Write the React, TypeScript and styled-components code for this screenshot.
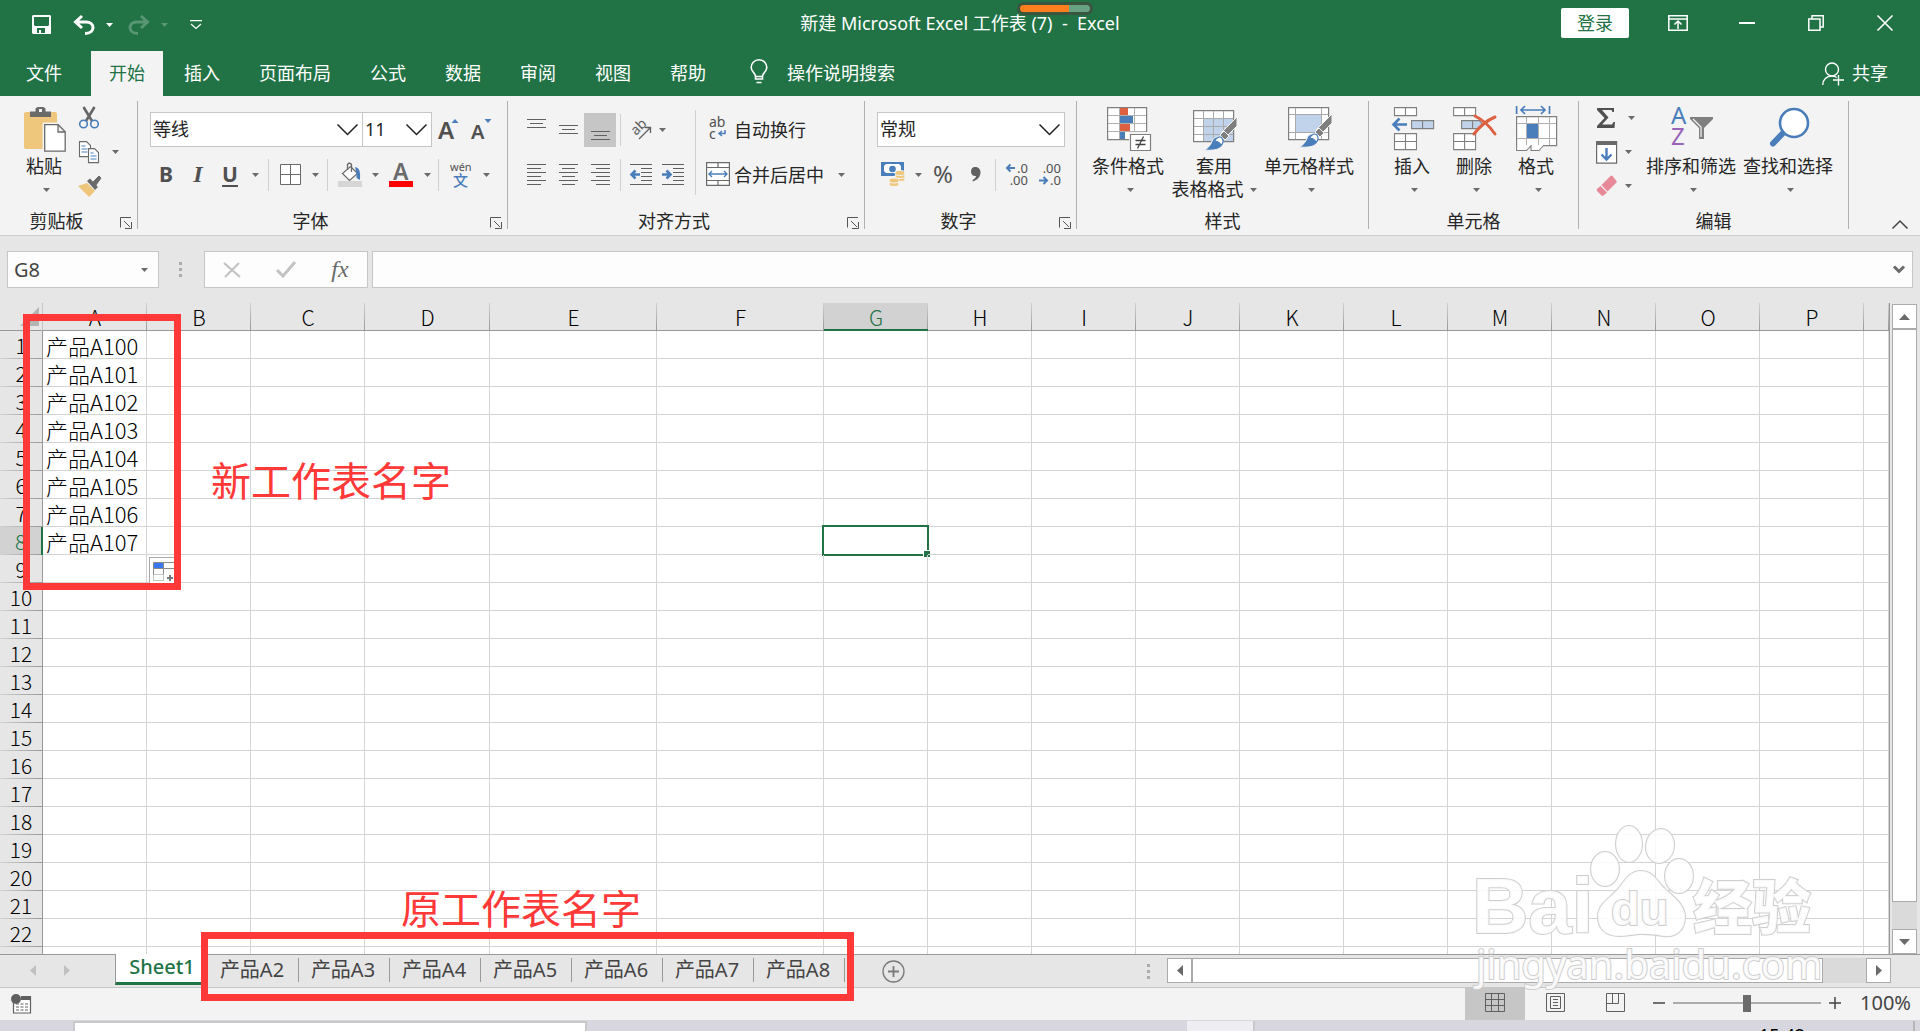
import React from "react";
import styled, { createGlobalStyle, css } from "styled-components";

const UI = `"Noto Sans", "Noto Sans CJK SC", sans-serif`;
const SHEET = `"Noto Sans CJK SC", sans-serif`;
const GREEN = "#217346";
const RED = "#ff3838";
const BLUE = "#4a7ebb";
const GREY = "#6a6a6a";

const Global = createGlobalStyle`
  *, *::before, *::after { box-sizing: border-box; }
  body { margin: 0; font-family: ${UI}; font-size: 18px; color: #262626; background: #e6e6e6; overflow: hidden; }
  button, input, select { font: inherit; color: inherit; margin: 0; padding: 0; border: 0; background: none; }
  svg { display: block; flex: none; overflow: visible; }
`;

const Window = styled.div`
  position: relative;
  display: flex;
  flex-direction: column;
  height: 100vh;
`;

/* ---------- title bar ---------- */
const TitleBar = styled.header`
  display: grid;
  grid-template-columns: 1fr auto 1fr;
  height: 51px;
  flex: none;
  background: ${GREEN};
  color: #fff;
`;
const QuickAccess = styled.div`
  display: flex;
  align-items: center;
  padding: 0 0 2px 32px;
`;
const PlainButton = styled.button<{ $before?: number; $dim?: boolean }>`
  display: flex;
  align-items: center;
  margin-left: ${(p) => p.$before ?? 0}px;
  opacity: ${(p) => (p.$dim ? 0.25 : 1)};
`;
const Title = styled.h1`
  margin: 0;
  font-size: 18px;
  font-weight: 400;
  line-height: 46px;
  white-space: pre;
`;
const WindowControls = styled.div`
  display: flex;
  justify-content: flex-end;
  align-items: center;
  height: 46px;
  padding-right: 1px;
`;
const Login = styled.button`
  width: 68px;
  height: 30px;
  margin-right: 14px;
  border-radius: 2px;
  background: #fff;
  color: ${GREEN};
  line-height: 30px;
`;
const WinButton = styled.button`
  display: grid;
  place-items: center;
  width: 69px;
  height: 46px;
`;
const Battery = styled.div`
  position: absolute;
  left: 1017px;
  top: 2px;
  width: 76px;
  height: 13px;
  border: 3px solid #39553f;
  border-radius: 7px;
  background: linear-gradient(90deg, #ff7f1e 0 70%, #68a283 70%);
`;

/* ---------- ribbon tabs ---------- */
const TabBar = styled.nav`
  display: flex;
  gap: 3px;
  height: 45px;
  flex: none;
  padding-right: 32px;
  background: ${GREEN};
  color: #fff;
`;
const Tab = styled.button<{ $active?: boolean; $file?: boolean }>`
  padding: 0 ${(p) => (p.$file ? 26 : 18)}px 4px;
  background: ${(p) => (p.$active ? "#f3f3f3" : "transparent")};
  color: ${(p) => (p.$active ? GREEN : "#fff")};
`;
const TellMe = styled.button`
  display: flex;
  align-items: center;
  gap: 19px;
  padding: 0 0 4px 23px;
`;
const Share = styled.button`
  display: flex;
  align-items: center;
  gap: 8px;
  margin-left: auto;
  padding-bottom: 4px;
  > svg { margin-top: 4px; }
`;

/* ---------- ribbon ---------- */
const Ribbon = styled.section`
  display: flex;
  flex: none;
  padding: 5px 0 6px;
  background: #f3f3f3;
  border-bottom: 1px solid #cfcfcf;
`;
const Group = styled.section<{ $w: number }>`
  display: flex;
  flex-direction: column;
  flex: 0 1 ${(p) => p.$w}px;
  height: 128px;
  border-right: 1px solid #b1b1b1;
`;
const GroupBody = styled.div<{ $left: number; $gap?: number }>`
  display: flex;
  flex: 1;
  gap: ${(p) => p.$gap ?? 0}px;
  padding-left: ${(p) => p.$left}px;
`;
const GroupFoot = styled.div`
  display: flex;
  align-items: flex-end;
  height: 16px;
  line-height: 16px;
`;
const GroupName = styled.h2`
  flex: 1;
  margin: 0;
  font-size: 18px;
  font-weight: 400;
  text-align: center;
`;
const Launcher = styled.button`
  width: 24px;
  padding-left: 7px;
`;
const Big = styled.button<{ $w: number }>`
  display: flex;
  flex-direction: column;
  align-items: center;
  width: ${(p) => p.$w}px;
  padding-top: 5px;
  line-height: 23px;
  white-space: nowrap;
  > svg { margin: 0 0 3px 2px; }
`;
const SecondLine = styled.span<{ $alone: boolean }>`
  display: flex;
  align-items: center;
  justify-content: center;
  gap: 6px;
  height: 23px;
  padding-left: ${(p) => (p.$alone ? 5 : 0)}px;
`;
const Stack = styled.div<{ $w?: number }>`
  display: flex;
  flex-direction: column;
  flex: none;
  width: ${(p) => (p.$w ? p.$w + "px" : "auto")};
`;
const SmallRow = styled.div<{ $gap: number }>`
  display: flex;
  align-items: center;
  gap: ${(p) => p.$gap}px;
  height: 34px;
`;
const Rows = styled.div`
  display: flex;
  flex-direction: column;
  padding-top: 6px;
`;
const Row = styled.div`
  display: flex;
  align-items: center;
  height: 45px;
`;
const Tool = styled.button<{ $w?: number; $on?: boolean }>`
  display: grid;
  place-items: center;
  width: ${(p) => p.$w ?? 32}px;
  height: 34px;
  background: ${(p) => (p.$on ? "#c6c6c6" : "transparent")};
  color: #505050;
`;
const Glyph = styled.span<{ $bold?: boolean; $italic?: boolean; $under?: boolean; $serif?: boolean; $size?: number }>`
  padding-bottom: 2px;
  font-family: ${(p) => (p.$serif ? `"Liberation Serif", serif` : UI)};
  font-weight: ${(p) => (p.$bold ? 700 : 400)};
  font-style: ${(p) => (p.$italic ? "italic" : "normal")};
  font-size: ${(p) => p.$size ?? 21}px;
  line-height: 24px;
  ${(p) => p.$under && css`text-decoration: underline; text-underline-offset: 3px;`}
`;
const Sep = styled.span<{ $h?: number }>`
  width: 1px;
  height: ${(p) => p.$h ?? 32}px;
  margin: 0 4px;
  background: #d0d0d0;
`;
const LongSep = styled.span`
  width: 1px;
  height: 85px;
  margin: 9px 5px 0 6px;
  background: #d0d0d0;
`;
const Labelled = styled.button`
  display: flex;
  align-items: center;
  gap: 4px;
  height: 45px;
  padding: 0 5px 2px;
  white-space: nowrap;
  > svg:last-child:not(:first-child) { margin: 2px 0 0 10px; }
`;
const SelectBox = styled.label<{ $w: number; $join?: boolean }>`
  display: grid;
  align-items: center;
  width: ${(p) => p.$w}px;
  height: 35px;
  margin-left: ${(p) => (p.$join ? -1 : 0)}px;
  border: 1px solid #c6c6c6;
  background: #fff;
  > * { grid-area: 1 / 1; }
  > svg { justify-self: end; margin-right: 4px; pointer-events: none; }
`;
const Select = styled.select`
  appearance: none;
  width: 100%;
  height: 33px;
  padding: 0 0 1px 2px;
  outline: 0;
`;
const Collapse = styled.button`
  align-self: flex-end;
  margin: 0 12px 0 auto;
`;

/* ---------- formula bar ---------- */
const FormulaRow = styled.section`
  display: flex;
  flex: none;
  height: 67px;
  padding: 15px 7px;
`;
const NameBox = styled.div`
  display: flex;
  align-items: center;
  width: 152px;
  padding-right: 10px;
  border: 1px solid #c6c6c6;
  background: #fdfdfd;
`;
const NameInput = styled.input`
  flex: 1;
  min-width: 0;
  padding-left: 6px;
  font-size: 20px;
  color: #444;
  outline: 0;
`;
const Dots = styled.span`
  display: flex;
  flex-direction: column;
  justify-content: center;
  gap: 3px;
  width: 3px;
  &::before, &::after, i { content: ""; width: 3px; height: 3px; background: #ababab; }
`;
const DotsSlot = styled.div`
  display: flex;
  justify-content: center;
  width: 45px;
  padding-right: 2px;
`;
const FnBox = styled.div`
  display: flex;
  width: 164px;
  margin-right: 4px;
  border: 1px solid #c6c6c6;
  background: #fdfdfd;
`;
const FnButton = styled.button`
  display: grid;
  place-items: center;
  flex: 1;
  color: #6a6a6a;
`;
const FormulaBox = styled.div`
  display: flex;
  align-items: center;
  flex: 1;
  padding-right: 7px;
  border: 1px solid #c6c6c6;
  background: #fdfdfd;
`;
const FormulaInput = styled.input`
  flex: 1;
  height: 100%;
  padding-left: 6px;
  outline: 0;
`;

/* ---------- sheet ---------- */
const SheetArea = styled.main`
  display: flex;
  flex: 1;
  min-height: 0;
`;
const Grid = styled.div`
  flex: 1;
  overflow: hidden;
  background: #fff;
  border-right: 1px solid #999;
`;
const Table = styled.table`
  table-layout: fixed;
  width: 100%;
  min-width: 1888px;
  border-collapse: separate;
  border-spacing: 0;
  font-family: ${SHEET};
  font-size: 21px;
  font-weight: 300;
  line-height: 24px;
  color: #000;
`;
const Corner = styled.th`
  height: 28px;
  padding: 0 3px 0 0;
  background: #e6e6e6;
  border-bottom: 1px solid #999;
  border-right: 1px solid #c6c6c6;
  > svg { margin-left: auto; }
`;
const ColHead = styled.th<{ $on: boolean }>`
  height: 28px;
  padding: ${(p) => (p.$on ? 2 : 1)}px 0 0;
  font-weight: inherit;
  text-align: center;
  color: ${(p) => (p.$on ? GREEN : "#000")};
  background: linear-gradient(#d0d0d0, #999) right / 1px 100% no-repeat, ${(p) => (p.$on ? "#d2d2d2" : "#e6e6e6")};
  border-bottom: ${(p) => (p.$on ? `2px solid ${GREEN}` : "1px solid #999")};
`;
const RowHead = styled.th<{ $on: boolean }>`
  height: 28px;
  padding: 0;
  font-weight: inherit;
  text-align: center;
  color: ${(p) => (p.$on ? GREEN : "#000")};
  background: linear-gradient(90deg, #d0d0d0, #999) bottom / 100% 1px no-repeat, ${(p) => (p.$on ? "#d2d2d2" : "#e6e6e6")};
  border-right: ${(p) => (p.$on ? `2px solid ${GREEN}` : "1px solid #999")};
`;
const Cell = styled.td`
  position: relative;
  height: 28px;
  padding: 0 0 0 3px;
  font-size: 22px;
  white-space: nowrap;
  border-right: 1px solid #d4d4d4;
  border-bottom: 1px solid #d4d4d4;
`;
const Selection = styled.span`
  position: absolute;
  inset: -2px;
  border: 2px solid ${GREEN};
  &::after {
    content: "";
    position: absolute;
    right: -4px;
    bottom: -4px;
    width: 8px;
    height: 8px;
    border: 1px solid #fff;
    background: ${GREEN};
  }
`;
const AutoFill = styled.button`
  position: absolute;
  left: 2px;
  top: 2px;
  display: grid;
  place-items: center;
  width: 32px;
  height: 29px;
  border: 1px solid #ababab;
  background: #fff;
`;
const VScroll = styled.div`
  display: flex;
  flex-direction: column;
  width: 25px;
  margin: 1px 3px 0 2px;
  background: #dadada;
`;
const ScrollButton = styled.button`
  display: grid;
  place-items: center;
  flex: none;
  width: 25px;
  height: 25px;
  border: 1px solid #ababab;
  background: #fff;
`;
const Thumb = styled.div<{ $grow: number }>`
  flex: ${(p) => p.$grow} 1 0;
  border: 1px solid #ababab;
  background: #fff;
`;
const Track = styled.div<{ $grow: number }>`
  flex: ${(p) => p.$grow} 1 0;
`;

/* ---------- sheet tabs ---------- */
const SheetBar = styled.div`
  display: flex;
  flex: none;
  height: 34px;
  padding-right: 29px;
  border-top: 1px solid #999;
  border-bottom: 1px solid #c6c6c6;
`;
const SheetNav = styled.div`
  display: flex;
  align-items: center;
  gap: 28px;
  width: 115px;
  padding: 0 0 2px 30px;
`;
const SheetTab = styled.button<{ $active?: boolean }>`
  flex: none;
  font-size: 20px;
  line-height: 24px;
  color: #444;
  ${(p) =>
    p.$active
      ? css`
          width: 93px;
          height: 31px;
          margin-top: -1px;
          padding-bottom: 3px;
          border-left: 1px solid #999;
          border-bottom: 3px solid ${GREEN};
          background: #fff;
          color: ${GREEN};
          font-weight: 500;
        `
      : css`
          width: 91px;
          height: 24px;
          margin-top: 3px;
          padding: 0 2px 7px 0;
          border-right: 1px solid #999;
        `}
`;
const AddSheet = styled.button`
  margin: 0 auto 0 37px;
`;
const HScroll = styled.div`
  display: flex;
  flex: 0 1 724px;
  height: 25px;
  margin: 3px 0 0 17px;
  background: #dadada;
`;

/* ---------- status bar ---------- */
const StatusBar = styled.footer`
  display: flex;
  align-items: center;
  flex: none;
  height: 32px;
  padding: 0 9px 0 11px;
  background: #f3f3f3;
`;
const ViewButton = styled.button<{ $on?: boolean; $first?: boolean }>`
  display: grid;
  place-items: center;
  width: 60px;
  height: 32px;
  margin-left: ${(p) => (p.$first ? "auto" : 0)};
  padding-bottom: 2px;
  background: ${(p) => (p.$on ? "#c6c6c6" : "transparent")};
`;
const Zoom = styled.div`
  display: flex;
  align-items: center;
  gap: 8px;
  height: 32px;
  margin-left: 8px;
  padding-bottom: 2px;
`;
const Range = styled.input`
  appearance: none;
  width: 148px;
  height: 17px;
  &::-webkit-slider-runnable-track { height: 17px; background: linear-gradient(#ababab, #ababab) center / 100% 2px no-repeat; }
  &::-webkit-slider-thumb { appearance: none; width: 8px; height: 17px; background: #6a6a6a; }
`;
const ZoomValue = styled.button`
  margin-left: 11px;
  font-size: 20px;
  line-height: 28px;
  color: #444;
`;

/* ---------- strip of desktop under the window ---------- */
const Desktop = styled.div`
  display: flex;
  flex: none;
  height: 11px;
  padding: 1px 5px 0 73px;
  overflow: hidden;
  background: #d8d7e0;
`;
const DesktopWindow = styled.div`
  width: 514px;
  border: 2px solid #c9c9c9;
  border-bottom: 0;
  background: #fff;
`;
const DesktopPane = styled.div`
  width: 68px;
  margin-left: auto;
  border-right: 2px solid #c9c9c9;
  background: #eeedf1;
`;
const Clock = styled.time`
  width: 660px;
  padding-right: 108px;
  border-right: 2px solid #b5b5b5;
  line-height: 28px;
  text-align: right;
  color: #000;
`;

/* ---------- annotations over the sheet ---------- */
const Frame = styled.div<{ $x: number; $y: number; $w: number; $h: number }>`
  position: absolute;
  left: ${(p) => p.$x}px;
  top: ${(p) => p.$y}px;
  width: ${(p) => p.$w}px;
  height: ${(p) => p.$h}px;
  border: 7px solid ${RED};
  pointer-events: none;
`;
const Note = styled.p<{ $x: number; $y: number }>`
  position: absolute;
  left: ${(p) => p.$x}px;
  top: ${(p) => p.$y}px;
  margin: 0;
  font-family: ${SHEET};
  font-size: 40px;
  line-height: 48px;
  color: ${RED};
  pointer-events: none;
`;
const Watermark = styled.svg`
  position: absolute;
  right: 92px;
  bottom: 31px;
  pointer-events: none;
`;

/* ---------- icons ---------- */
const Caret = ({ c = GREY }: { c?: string }) => (
  <svg width="7" height="4"><path d="M0 0h7L3.500 4z" fill={c} /></svg>
);
const Chevron = () => (
  <svg width="21" height="12" fill="none" stroke="#222" strokeWidth="1.500"><path d="M.5.5l10 10 10-10" /></svg>
);
const LaunchIcon = () => (
  <svg width="12" height="12" fill="none" stroke="#555"><path d="M.5 10.500V.5H11M4 4l6 6M11.500 5v6.500H5" /></svg>
);
const SaveIcon = () => (
  <svg width="19" height="19"><path fill="#fff" fillRule="evenodd" d="M0 1l1-1h17l1 1v18H1l-1-1zM2 2v8l1 1h13l1-1V2zM5 13v5h2v-3h2v3h4v-5z" /></svg>
);
const UndoIcon = () => (
  <svg width="22" height="20" fill="none" stroke="#fff" strokeWidth="3"><path d="M9 1L2.500 7 9 13M3 7h10c5 0 7 3 7 5.500s-2 6-8 6" /></svg>
);
const RedoIcon = () => (
  <svg width="22" height="20" fill="none" stroke="#fff" strokeWidth="3"><path d="M13 1l6.500 6-6.500 6M19 7H9c-5 0-7 3-7 5.500s2 6 8 6" /></svg>
);
const CustomizeIcon = () => (
  <svg width="12" height="9" fill="none" stroke="#fff" strokeWidth="1.200"><path d="M0 .6h12M1 4L6 8.500 11 4" /></svg>
);
const RibbonIcon = () => (
  <svg width="20" height="16" fill="none" stroke="#fff" strokeWidth="1.500"><path d="M.8.8h18.400v14.400H.8zM1 4h18M10 14V6.500M6.500 9.500L10 6l3.500 3.500" /></svg>
);
const MinIcon = () => <svg width="16" height="2"><path d="M0 0h16v2H0z" fill="#fff" /></svg>;
const RestoreIcon = () => (
  <svg width="16" height="16" fill="none" stroke="#fff" strokeWidth="1.500"><path d="M.8 4h11.200v11.200H.8zM4 3.500V.8h11.200V12h-3" /></svg>
);
const CloseIcon = () => (
  <svg width="16" height="16" stroke="#fff" strokeWidth="1.600"><path d="M.5.5l15 15M15.500.5l-15 15" /></svg>
);
const BulbIcon = () => (
  <svg width="18" height="25" fill="none" stroke="#fff" strokeWidth="1.600"><path d="M5.500 20v-3C5 14 1.200 12.500 1.200 8.500A7.800 7.800 0 0 1 16.800 8.500c0 4-3.800 5.500-4.300 8.500v3zM5.500 17.500h7M6.500 23.500h5" /></svg>
);
const PersonIcon = () => (
  <svg width="22" height="24" fill="none" stroke="#fff" strokeWidth="1.400"><circle cx="10" cy="7.500" r="6.500" /><path d="M.7 23c0-5.500 4-9 9-9 2 0 3.500.3 5 1.500M16.500 13v10.500M11 18h11" /></svg>
);
const PasteIcon = () => (
  <svg width="42" height="46">
    <rect y="6" width="33" height="37" rx="2" fill="#eec77d" />
    <path d="M6 11V5.500h5.500V2.500l2-1.500h6l2 1.500v3H27V11z" fill="#6a6a6a" /><rect x="15" y="3" width="3" height="3" fill="#f3f3f3" />
    <path d="M18.500 16.500h16v29h-16z" fill="#f3f3f3" />
    <path d="M20.700 18.700h13.500l7 7v19.500H20.700zM34 19v7h7" fill="#fff" stroke="#6a6a6a" strokeWidth="1.300" />
  </svg>
);
const CutIcon = () => (
  <svg width="22" height="22" fill="none"><path d="M5.500 0L14 14M16.500 0L8 14" stroke="#666" strokeWidth="2.600" /><g stroke={BLUE} strokeWidth="1.600"><circle cx="5.500" cy="17" r="3.800" /><circle cx="16.500" cy="17" r="3.800" /></g></svg>
);
const CopyIcon = () => (
  <svg width="22" height="22"><g fill="#fff" stroke="#6a6a6a" strokeWidth="1.100"><path d="M1.500.6h7l4 4v11h-11z" /><path d="M10.500 7.600h6l4 4v10h-10z" /></g><path d="M3.500 5h4M3.500 8h6M3.500 11h6M12.500 12h3M12.500 15h6M12.500 18h6" stroke={BLUE} strokeWidth="1.100" /></svg>
);
const BrushIcon = () => (
  <svg width="24" height="22"><path d="M0 11l9-3 8 8-6 6z" fill="#eec77d" /><path d="M9 6l3-2.500L20 12l-3 3z" fill="#6a6a6a" /><path d="M15 7l6-6 2 2-5 7z" fill="#6a6a6a" stroke="#6a6a6a" /></svg>
);
const GrowIcon = ({ up }: { up: boolean }) => (
  <svg width="22" height="24">
    <text x="0" y={21} fontFamily="Noto Sans" fontWeight="600" fontSize={up ? 24 : 20} fill="#505050">A</text>
    <path d={up ? "M13.500 5h7L17 1z" : "M13.500 1h7L17 5z"} fill={BLUE} />
  </svg>
);
const BorderIcon = () => (
  <svg width="21" height="21" fill="#fff" stroke="#6a6a6a"><path d="M.5.5h20v20H.5zM10.500.5v20M.5 10.500h20" /></svg>
);
const FillIcon = () => (
  <svg width="24" height="26">
    <path d="M12.500 4.500l7 7-8 7-7-7z" fill="#fff" stroke="#6a6a6a" strokeWidth="1.200" /><path d="M9.500 8V2.500Q11.500 0 13.500 2.500V10" fill="none" stroke="#6a6a6a" strokeWidth="1.300" />
    <path d="M17 5c5 1 5.500 5 5 13l-3.500-2v-5z" fill={BLUE} /><path d="M0 19h24v6H0z" fill="#d6d6d6" />
  </svg>
);
const FontColorIcon = () => (
  <svg width="24" height="26"><text x="4" y="18" fontFamily="Noto Sans" fontWeight="600" fontSize="23" fill="#6a6a6a">A</text><path d="M0 19h24v6H0z" fill="red" /></svg>
);
const PhoneticIcon = () => (
  <svg width="22" height="26"><text x="0" y="9" fontFamily="Noto Sans" fontSize="11" fill="#505050">wén</text><text x="3" y="24" fontFamily="Noto Sans CJK SC" fontSize="15" fontWeight="500" fill={BLUE}>文</text></svg>
);
const Lines = ({ rows, top = 0 }: { rows: number[][]; top?: number }) => (
  <svg width="19" height="22" stroke="#606060"><path d={rows.map(([x, w], i) => `M${x} ${top + i * 4 + 0.5}h${w}`).join("")} /></svg>
);
const IndentIcon = ({ right }: { right?: boolean }) => (
  <svg width="22" height="22"><path d="M0 .5h22M11 4.500h11M11 8.500h11M11 12.500h11M11 16.500h11M0 20.500h22" stroke="#606060" />
    <path d={right ? "M0 10.500h8M4.500 6.500l4 4-4 4" : "M10 10.500H2M5.500 6.500l-4 4 4 4"} fill="none" stroke={BLUE} strokeWidth="2.600" /></svg>
);
const OrientIcon = () => (
  <svg width="20" height="20"><text transform="translate(5 16) rotate(-45)" fontFamily="Noto Sans" fontSize="14" fill="#606060">ab</text><path d="M8 19L19 8M14 7.500h5.500V13" fill="none" stroke="#606060" strokeWidth="1.300" /></svg>
);
const WrapIcon = () => (
  <svg width="24" height="26"><text x="3" y="11" fontFamily="Noto Sans" fontSize="14" fill="#505050">ab</text><text x="3" y="23" fontFamily="Noto Sans" fontSize="14" fill="#505050">c</text><path d="M19 14v3.500h-5M16 15l-3 2.500 3 2.500" fill="none" stroke={BLUE} strokeWidth="1.500" /></svg>
);
const MergeIcon = () => (
  <svg width="24" height="24"><path d="M.6.6h22.800v22.800H.6zM.6 5.500h22.800M.6 18.500h22.800M12 .6v5M12 18.500v5" fill="#fff" stroke="#6a6a6a" strokeWidth="1.200" /><path d="M3 12h18M6 9l-3 3 3 3M18 9l3 3-3 3" fill="none" stroke={BLUE} strokeWidth="1.400" /></svg>
);
const MoneyIcon = () => (
  <svg width="24" height="25"><path d="M0 0h23v14H0z" fill={BLUE} /><path d="M3 4l2-2h13l2 2v5l-2 2H5L3 9z" fill="#fff" /><circle cx="11.500" cy="7" r="3.300" fill={BLUE} />
    <g fill="#eec77d" stroke="#f3f3f3"><ellipse cx="19" cy="17" rx="5" ry="2.500" /><ellipse cx="19" cy="14" rx="5" ry="2.500" /><ellipse cx="19" cy="11" rx="5" ry="2.500" /><ellipse cx="13" cy="22" rx="5" ry="2.500" /><ellipse cx="13" cy="18.500" rx="5" ry="2.500" /></g></svg>
);
const DecimalIcon = ({ more }: { more?: boolean }) => (
  <svg width="24" height="26" fontFamily="Noto Sans" fontSize="13" fill="#505050">
    <text x="23" y="11" textAnchor="end">{more ? ".0" : ".00"}</text><text x="23" y="23" textAnchor="end">{more ? ".00" : ".0"}</text>
    <path d={more ? "M10 6H2.500M5.500 2.500L2 6l3.500 3.500" : "M1 18.500h7.500M5.500 15L9 18.500 5.500 22"} fill="none" stroke={BLUE} strokeWidth="2" />
  </svg>
);
const CondIcon = () => (
  <svg width="44" height="46">
    <path d="M.6 1.600h39v32H.6z" fill="#fff" stroke="#7f7f7f" strokeWidth="1.200" /><path d="M1 9.500h38M1 17.500h38M1 25.500h38M12.500 2v31M27.500 2v31" stroke="#b0b0b0" />
    <path d="M13 2h8v7h-8zM13 18h10v7H13z" fill="#dc6141" /><path d="M13 10h13v7H13zM13 26h5v7h-5z" fill={BLUE} />
    <path d="M22 26h22v19H22z" fill="#f3f3f3" /><path d="M23.500 28.500h20v16h-20z" fill="#fff" stroke="#7f7f7f" strokeWidth="1.200" /><path d="M28.500 34.500h10M28.500 38.500h10M36.500 30.500l-6 12" stroke="#444" strokeWidth="1.300" />
  </svg>
);
const PaintBrush = () => (
  <g><path d="M44 11v9L33 31l-5-4z" fill="#7f7f7f" stroke="#f3f3f3" /><path d="M31 25l5 5-4 4-5-5z" fill="#7f7f7f" stroke="#f3f3f3" /><path d="M20 33q5-4 8-1 4 5-1 10-5 3-16 2 6-2 9-11z" fill={BLUE} stroke="#f3f3f3" /><path d="M21.500 35q4-6 7.500-3 2.500 4-1 7.500-1-4-6.500-4.500z" fill="#fff" stroke={BLUE} strokeWidth="1.200" /></g>
);
const TableFmtIcon = () => (
  <svg width="44" height="46"><path d="M.6 4.600h40v31H.6z" fill="#fff" stroke="#7f7f7f" strokeWidth="1.200" /><path d="M11 13h29v22H11z" fill="#c0d3ea" /><path d="M1 12.500h39M1 20.500h39M1 28.500h39M10.500 5v30M20.500 5v30M30.500 5v30" stroke="#aaa" /><PaintBrush /></svg>
);
const CellStyleIcon = () => (
  <svg width="44" height="46"><path d="M.6 1.600h40v32H.6z" fill="#fff" stroke="#7f7f7f" strokeWidth="1.200" /><path d="M8 9h25v17H8z" fill="#c0d3ea" /><path d="M1 8.500h39M1 26.500h39M7.500 2v31M33.500 2v31" stroke="#aaa" fill="none" /><g transform="translate(0 -3)"><PaintBrush /></g></svg>
);
const CellBlocks = ({ x }: { x: number }) => (
  <path d={`M${x} 1.600h22v8h-22zM${x} 27.600h22v16h-22zM${x} 35.500h22M${x + 11} 1.600v8M${x + 11} 27.600v16`} fill="#fff" stroke="#7f7f7f" strokeWidth="1.100" />
);
const InsertIcon = () => (
  <svg width="44" height="46"><CellBlocks x={3.5} /><path d="M20.600 14.600h22v8h-22zM31.600 14.600v8" fill="#c0d3ea" stroke="#7f7f7f" strokeWidth="1.100" /><path d="M16 18.500H2M8.500 12.500l-6 6 6 6" fill="none" stroke={BLUE} strokeWidth="2.600" /></svg>
);
const DeleteIcon = () => (
  <svg width="44" height="46"><CellBlocks x={0.6} /><path d="M8.600 14.600h18l3 4-3 4h-18zM19.600 14.600v8" fill="#c0d3ea" stroke="#7f7f7f" strokeWidth="1.100" /><path d="M22 10q12 6 20 18M42 11Q30 16 21 28" fill="none" stroke="#dc6141" strokeWidth="3" strokeLinecap="round" /></svg>
);
const FormatIcon = () => (
  <svg width="42" height="46"><path d="M.6 10.600h40v29H.6z" fill="#fff" stroke="#7f7f7f" strokeWidth="1.200" /><path d="M1 17.500h39M1 32.500h39M10.500 11v28M22.500 11v28M33.500 11v28" stroke="#b0b0b0" /><path d="M11 18h11v14H11z" fill={BLUE} /><path d="M.6 39v5.500h10l5-5.500M15 39v5.500h8l5-5.500" fill="#fff" stroke="#7f7f7f" strokeWidth="1.100" />
    <path d="M.6 0v8M33.500 0v8M5 4h24M9 0L5 4l4 4M25 0l4 4-4 4" fill="none" stroke={BLUE} strokeWidth="1.700" /></svg>
);
const SumIcon = () => (
  <svg width="20" height="20"><path d="M1 0h17v4h-1.500L15.500 2H6l6.500 7.500L6 16.500h10l1.500-2.500H19l-.5 6H1v-2l7.500-8L1 2z" fill="#505050" /></svg>
);
const FillDownIcon = () => (
  <svg width="22" height="23"><path d="M.6.6h20v21.500H.6z" fill="#fff" stroke="#6a6a6a" strokeWidth="1.200" /><path d="M0 0h21v4H0z" fill="#6a6a6a" /><path d="M10.500 7v11M5.500 13.500l5 5 5-5" fill="none" stroke={BLUE} strokeWidth="2.400" /></svg>
);
const EraserIcon = () => (
  <svg width="22" height="22" fill="#e8899a"><path d="M14.500 1q1-.8 2 0l4 5q.5 1 0 1.500l-9 9-6-6.500z" /><path d="M4.500 11l6.500 6.500-3.500 3q-1 .6-2 0L1 16q-.5-1 0-2z" /></svg>
);
const SortIcon = () => (
  <svg width="42" height="46" fontFamily="Noto Sans" fontSize="24"><text x="0" y="18" fill={BLUE}>A</text><text x="0" y="39" fill="#9a63b8">Z</text><path d="M19 11h23v2l-9 9v11h-5V22l-9-9z" fill="#7f7f7f" /><path d="M22 13l8 8v10" fill="none" stroke="#f3f3f3" strokeWidth="1.200" /></svg>
);
const FindIcon = () => (
  <svg width="42" height="46"><path d="M17 25L5 37.500" stroke={BLUE} strokeWidth="6" strokeLinecap="round" /><circle cx="26" cy="17" r="14" fill="#fff" stroke={BLUE} strokeWidth="2.600" /></svg>
);
const Triangle = ({ d, c = "#6a6a6a", w = 11, h = 11 }: { d: string; c?: string; w?: number; h?: number }) => (
  <svg width={w} height={h}><path d={d} fill={c} /></svg>
);

const CaretTool = ({ w, label }: { w: number; label: string }) => (
  <Tool $w={w} aria-label={label}><Caret /></Tool>
);

const Foot = ({ name, launch }: { name: string; launch?: boolean }) => (
  <GroupFoot>
    <GroupName>{name}</GroupName>
    {launch && <Launcher aria-label={name}><LaunchIcon /></Launcher>}
  </GroupFoot>
);

const BigTool = ({ w, icon, label, second }: { w: number; icon: React.ReactNode; label: string; second?: string }) => (
  <Big $w={w}>
    {icon}
    <span>{label}</span>
    <SecondLine $alone={!second}>{second}<Caret /></SecondLine>
  </Big>
);

const tabs = ["插入", "页面布局", "公式", "数据", "审阅", "视图", "帮助"];
const columns: [string, number][] = [
  ["A", 104], ["B", 104], ["C", 114], ["D", 125], ["E", 167], ["F", 167],
  ..."GHIJKLMNOP".split("").map((c): [string, number] => [c, 104]),
];
const rowCount = 23;
const products = Array.from({ length: 8 }, (_, i) => `产品A${100 + i}`);
const sheets = ["产品A2", "产品A3", "产品A4", "产品A5", "产品A6", "产品A7", "产品A8"];

const full = [0, 19];
const mid = [3, 13];

export default function App() {
  return (
    <Window>
      <Global />
      <TitleBar>
        <QuickAccess>
          <PlainButton aria-label="保存"><SaveIcon /></PlainButton>
          <PlainButton aria-label="撤消" $before={22}><UndoIcon /></PlainButton>
          <PlainButton aria-label="撤消列表" $before={11}><Caret c="#fff" /></PlainButton>
          <PlainButton aria-label="恢复" $before={15} $dim><RedoIcon /></PlainButton>
          <PlainButton aria-label="恢复列表" $before={11} $dim><Caret c="#fff" /></PlainButton>
          <PlainButton aria-label="自定义" $before={22}><CustomizeIcon /></PlainButton>
        </QuickAccess>
        <Title>{"新建 Microsoft Excel 工作表 (7)  -  Excel"}</Title>
        <WindowControls>
          <Login>登录</Login>
          <WinButton aria-label="功能区显示选项"><RibbonIcon /></WinButton>
          <WinButton aria-label="最小化"><MinIcon /></WinButton>
          <WinButton aria-label="还原"><RestoreIcon /></WinButton>
          <WinButton aria-label="关闭"><CloseIcon /></WinButton>
        </WindowControls>
      </TitleBar>
      <Battery />

      <TabBar>
        <Tab $file>文件</Tab>
        <Tab $active>开始</Tab>
        {tabs.map((t) => <Tab key={t}>{t}</Tab>)}
        <TellMe><BulbIcon />操作说明搜索</TellMe>
        <Share><PersonIcon />共享</Share>
      </TabBar>

      <Ribbon>
        <Group $w={138}>
          <GroupBody $left={21} $gap={11}>
            <BigTool w={46} icon={<PasteIcon />} label="粘贴" />
            <Stack>
              <SmallRow $gap={0}><PlainButton aria-label="剪切"><CutIcon /></PlainButton></SmallRow>
              <SmallRow $gap={12}>
                <PlainButton aria-label="复制"><CopyIcon /></PlainButton>
                <PlainButton aria-label="复制选项"><Caret /></PlainButton>
              </SmallRow>
              <SmallRow $gap={0}><PlainButton aria-label="格式刷"><BrushIcon /></PlainButton></SmallRow>
            </Stack>
          </GroupBody>
          <Foot name="剪贴板" launch />
        </Group>

        <Group $w={370}>
          <GroupBody $left={12}>
            <Rows>
              <Row>
                <SelectBox $w={213}><Select aria-label="字体"><option>等线</option></Select><Chevron /></SelectBox>
                <SelectBox $w={70} $join><Select aria-label="字号"><option>11</option></Select><Chevron /></SelectBox>
                <Tool $w={34} aria-label="增大字号"><GrowIcon up /></Tool>
                <Tool aria-label="减小字号"><GrowIcon up={false} /></Tool>
              </Row>
              <Row>
                <Tool aria-label="加粗"><Glyph $bold>B</Glyph></Tool>
                <Tool aria-label="倾斜"><Glyph $bold $italic $serif $size={24}>I</Glyph></Tool>
                <Tool aria-label="下划线"><Glyph $bold $under>U</Glyph></Tool>
                <CaretTool w={18} label="下划线选项" />
                <Sep />
                <Tool $w={34} aria-label="边框"><BorderIcon /></Tool>
                <CaretTool w={16} label="边框选项" />
                <Sep />
                <Tool $w={36} aria-label="填充颜色"><FillIcon /></Tool>
                <CaretTool w={14} label="填充颜色选项" />
                <Tool $w={38} aria-label="字体颜色"><FontColorIcon /></Tool>
                <CaretTool w={14} label="字体颜色选项" />
                <Sep />
                <Tool $w={36} aria-label="拼音"><PhoneticIcon /></Tool>
                <CaretTool w={14} label="拼音选项" />
              </Row>
            </Rows>
          </GroupBody>
          <Foot name="字体" launch />
        </Group>

        <Group $w={357}>
          <GroupBody $left={12}>
            <Rows>
              <Row>
                <Tool aria-label="顶端对齐"><Lines rows={[full, mid, full]} /></Tool>
                <Tool aria-label="垂直居中"><Lines rows={[full, mid, full]} top={6} /></Tool>
                <Tool $on aria-label="底端对齐"><Lines rows={[full, mid, full]} top={12} /></Tool>
                <Sep />
                <Tool aria-label="方向"><OrientIcon /></Tool>
                <CaretTool w={10} label="方向选项" />
              </Row>
              <Row>
                <Tool aria-label="左对齐"><Lines rows={[full, [0, 14], full, [0, 14], full, [0, 14]]} /></Tool>
                <Tool aria-label="居中"><Lines rows={[full, mid, full, mid, full, mid]} /></Tool>
                <Tool aria-label="右对齐"><Lines rows={[full, [5, 14], full, [5, 14], full, [5, 14]]} /></Tool>
                <Sep />
                <Tool aria-label="减少缩进"><IndentIcon /></Tool>
                <Tool aria-label="增加缩进"><IndentIcon right /></Tool>
              </Row>
            </Rows>
            <LongSep />
            <Rows>
              <Labelled><WrapIcon />自动换行</Labelled>
              <Labelled><MergeIcon />合并后居中<Caret /></Labelled>
            </Rows>
          </GroupBody>
          <Foot name="对齐方式" launch />
        </Group>

        <Group $w={212}>
          <GroupBody $left={12}>
            <Rows>
              <Row>
                <SelectBox $w={188}><Select aria-label="数字格式"><option>常规</option></Select><Chevron /></SelectBox>
              </Row>
              <Row>
                <Tool aria-label="会计数字格式"><MoneyIcon /></Tool>
                <CaretTool w={18} label="会计数字格式选项" />
                <Tool aria-label="百分比样式"><Glyph $size={24}>%</Glyph></Tool>
                <Tool aria-label="千位分隔样式">
                  <svg width="11" height="15"><path d="M5 0c4 0 5.500 2.500 5.500 5.500C10.500 10 7 13 3 14.500L2.500 13c2.500-1.300 3.500-2.700 3.500-4C3 9.500 1 7.500 1 4.500 1 2 2.500 0 5 0z" fill="#606060" /></svg>
                </Tool>
                <Sep />
                <Tool $w={34} aria-label="增加小数位数"><DecimalIcon more /></Tool>
                <Tool aria-label="减少小数位数"><DecimalIcon /></Tool>
              </Row>
            </Rows>
          </GroupBody>
          <Foot name="数字" launch />
        </Group>

        <Group $w={292}>
          <GroupBody $left={14} $gap={5}>
            <BigTool w={74} icon={<CondIcon />} label="条件格式" />
            <BigTool w={88} icon={<TableFmtIcon />} label="套用" second="表格格式" />
            <BigTool w={92} icon={<CellStyleIcon />} label="单元格样式" />
          </GroupBody>
          <Foot name="样式" />
        </Group>

        <Group $w={210}>
          <GroupBody $left={12}>
            <BigTool w={62} icon={<InsertIcon />} label="插入" />
            <BigTool w={62} icon={<DeleteIcon />} label="删除" />
            <BigTool w={62} icon={<FormatIcon />} label="格式" />
          </GroupBody>
          <Foot name="单元格" />
        </Group>

        <Group $w={270}>
          <GroupBody $left={17} $gap={3}>
            <Stack $w={45}>
              <SmallRow $gap={12}>
                <PlainButton aria-label="自动求和"><SumIcon /></PlainButton>
                <PlainButton aria-label="求和选项"><Caret /></PlainButton>
              </SmallRow>
              <SmallRow $gap={7}>
                <PlainButton aria-label="填充"><FillDownIcon /></PlainButton>
                <PlainButton aria-label="填充选项"><Caret /></PlainButton>
              </SmallRow>
              <SmallRow $gap={7}>
                <PlainButton aria-label="清除"><EraserIcon /></PlainButton>
                <PlainButton aria-label="清除选项"><Caret /></PlainButton>
              </SmallRow>
            </Stack>
            <BigTool w={94} icon={<SortIcon />} label="排序和筛选" />
            <BigTool w={94} icon={<FindIcon />} label="查找和选择" />
          </GroupBody>
          <Foot name="编辑" />
        </Group>
        <Collapse aria-label="折叠功能区">
          <svg width="16" height="9" fill="none" stroke="#444" strokeWidth="1.500"><path d="M.5 8.500L8 1l7.500 7.500" /></svg>
        </Collapse>
      </Ribbon>

      <FormulaRow>
        <NameBox><NameInput aria-label="名称框" defaultValue="G8" /><Caret /></NameBox>
        <DotsSlot><Dots><i /></Dots></DotsSlot>
        <FnBox>
          <FnButton aria-label="取消"><svg width="18" height="16" stroke="#c3c3c3" strokeWidth="2.200"><path d="M1 1l16 14M16 1L2 15" /></svg></FnButton>
          <FnButton aria-label="输入"><svg width="20" height="17" fill="none" stroke="#c3c3c3" strokeWidth="3"><path d="M1 9l6 6L19 1" /></svg></FnButton>
          <FnButton aria-label="插入函数"><Glyph $italic $serif $size={24}>fx</Glyph></FnButton>
        </FnBox>
        <FormulaBox>
          <FormulaInput aria-label="编辑栏" />
          <svg width="12" height="9" fill="none" stroke="#6a6a6a" strokeWidth="3"><path d="M1 1.500l5 5 5-5" /></svg>
        </FormulaBox>
      </FormulaRow>

      <SheetArea>
        <Grid>
          <Table>
            <colgroup>
              <col style={{ width: 43 }} />
              {columns.map(([c, w]) => <col key={c} style={{ width: w }} />)}
              <col />
            </colgroup>
            <thead>
              <tr>
                <Corner aria-label="全选"><Triangle w={19} h={19} d="M19 0v19H0z" c="#b4b4b4" /></Corner>
                {columns.map(([c]) => <ColHead key={c} $on={c === "G"}>{c}</ColHead>)}
                <ColHead $on={false} aria-label="Q" />
              </tr>
            </thead>
            <tbody>
              {Array.from({ length: rowCount }, (_, r) => (
                <tr key={r}>
                  <RowHead $on={r === 7}>{r < 22 ? r + 1 : ""}</RowHead>
                  {columns.map(([c]) => (
                    <Cell key={c}>
                      {c === "A" && products[r]}
                      {c === "G" && r === 7 && <Selection />}
                      {c === "B" && r === 8 && (
                        <AutoFill aria-label="自动填充选项">
                          <svg width="24" height="20" fill="#fff" stroke="#8a8a8a"><path d="M.5.5h10v6H.5z" fill="#3b78f0" /><path d="M10.500.5h12v6h-12zM.5 6.500h10v6H.5z" /><path d="M.5 12.500v6h10v-6" strokeDasharray="1 1" /><path d="M14 16h6M17 13v6" stroke="#777" strokeWidth="2" /></svg>
                        </AutoFill>
                      )}
                    </Cell>
                  ))}
                  <Cell />
                </tr>
              ))}
            </tbody>
          </Table>
        </Grid>
        <VScroll>
          <ScrollButton aria-label="向上滚动"><Triangle w={11} h={6} d="M0 6h11L5.500 0z" /></ScrollButton>
          <Thumb $grow={574} />
          <Track $grow={27} />
          <ScrollButton aria-label="向下滚动"><Triangle w={11} h={6} d="M0 0h11L5.500 6z" /></ScrollButton>
        </VScroll>
      </SheetArea>

      <SheetBar>
        <SheetNav>
          <PlainButton aria-label="上一张"><Triangle w={6} h={11} d="M6 0v11L0 5.500z" c="#c0c0c0" /></PlainButton>
          <PlainButton aria-label="下一张"><Triangle w={6} h={11} d="M0 0v11l6-5.500z" c="#c0c0c0" /></PlainButton>
        </SheetNav>
        <SheetTab $active>Sheet1</SheetTab>
        {sheets.map((s) => <SheetTab key={s}>{s}</SheetTab>)}
        <AddSheet aria-label="新工作表">
          <svg width="23" height="23" fill="none" stroke="#7a7a7a" strokeWidth="1.300"><circle cx="11.500" cy="11.500" r="10.500" /><path d="M11.500 6v11M6 11.500h11" strokeWidth="1.800" /></svg>
        </AddSheet>
        <Dots><i /></Dots>
        <HScroll>
          <ScrollButton aria-label="向左滚动"><Triangle w={6} h={11} d="M6 0v11L0 5.500z" /></ScrollButton>
          <Thumb $grow={631} />
          <Track $grow={43} />
          <ScrollButton aria-label="向右滚动"><Triangle w={6} h={11} d="M0 0v11l6-5.500z" /></ScrollButton>
        </HScroll>
      </SheetBar>

      <StatusBar>
        <PlainButton aria-label="录制宏">
          <svg width="20" height="20"><path d="M2.500 7v12h17V3H10" fill="#fff" stroke="#606060" strokeWidth="1.200" /><path d="M10 2h10v4H10z" fill="#606060" /><circle cx="5" cy="5" r="5" fill="#606060" /><path d="M5 10h12M5 13h12M5 16h12" stroke="#606060" strokeDasharray="3 1.500" /></svg>
        </PlainButton>
        <ViewButton $on $first aria-label="普通">
          <svg width="20" height="20" fill="none" stroke="#606060"><path d="M.5.5h19v18H.5zM.5 6.500h19M.5 12.500h19M6.500.5v18M13.500.5v18" /></svg>
        </ViewButton>
        <ViewButton aria-label="页面布局">
          <svg width="19" height="20" fill="none" stroke="#606060"><path d="M.5.5h18v18H.5zM4.500 3.500h10v12h-10zM7 6.500h5M7 9.500h5M7 12.500h5" /></svg>
        </ViewButton>
        <ViewButton aria-label="分页预览">
          <svg width="19" height="20" fill="none" stroke="#606060"><path d="M.5.5h18v18H.5zM.5 10.500h12V.5M6.500.5v10" /></svg>
        </ViewButton>
        <Zoom>
          <PlainButton aria-label="缩小"><svg width="12" height="12" stroke="#444" strokeWidth="1.500"><path d="M0 6h12" /></svg></PlainButton>
          <Range type="range" aria-label="显示比例" min={0} max={100} defaultValue={50} />
          <PlainButton aria-label="放大"><svg width="12" height="12" stroke="#444" strokeWidth="1.500"><path d="M0 6h12M6 0v12" /></svg></PlainButton>
          <ZoomValue>100%</ZoomValue>
        </Zoom>
      </StatusBar>

      <Desktop>
        <DesktopWindow />
        <DesktopPane />
        <Clock>15:42</Clock>
      </Desktop>

      <Frame $x={23} $y={314} $w={158} $h={276} />
      <Note $x={211} $y={455}>新工作表名字</Note>
      <Frame $x={201} $y={932} $w={653} $h={69} />
      <Note $x={401} $y={883}>原工作表名字</Note>

      <Watermark width="360" height="180" viewBox="0 0 360 180" fill="#fff" fillOpacity="0.850" stroke="#cfcfcf" strokeWidth="2" paintOrder="stroke">
        <text x="4" y="113" fontFamily="Liberation Sans" fontWeight="700" fontSize="78">Bai</text>
        <ellipse cx="137" cy="49" rx="14" ry="17" />
        <ellipse cx="161" cy="24" rx="13" ry="18" />
        <ellipse cx="192" cy="26" rx="14" ry="17" transform="rotate(10 192 26)" />
        <ellipse cx="211" cy="56" rx="14" ry="17" />
        <path d="M173 51c12 0 16 10 24 18 10 9 20 16 20 28 0 14-10 21-22 19-10-2-14-2-22-2s-12 2-22 2c-14 0-21-8-21-19 0-13 11-18 20-28 7-8 11-18 23-18z" />
        <text x="143" y="105" fontFamily="Liberation Sans" fontWeight="700" fontSize="47">du</text>
        <text x="225" y="109" fontFamily="Noto Sans CJK SC" fontWeight="900" fontSize="59">经验</text>
        <text x="8" y="159" fontFamily="Noto Sans" fontSize="40">jingyan.baidu.com</text>
      </Watermark>
    </Window>
  );
}
